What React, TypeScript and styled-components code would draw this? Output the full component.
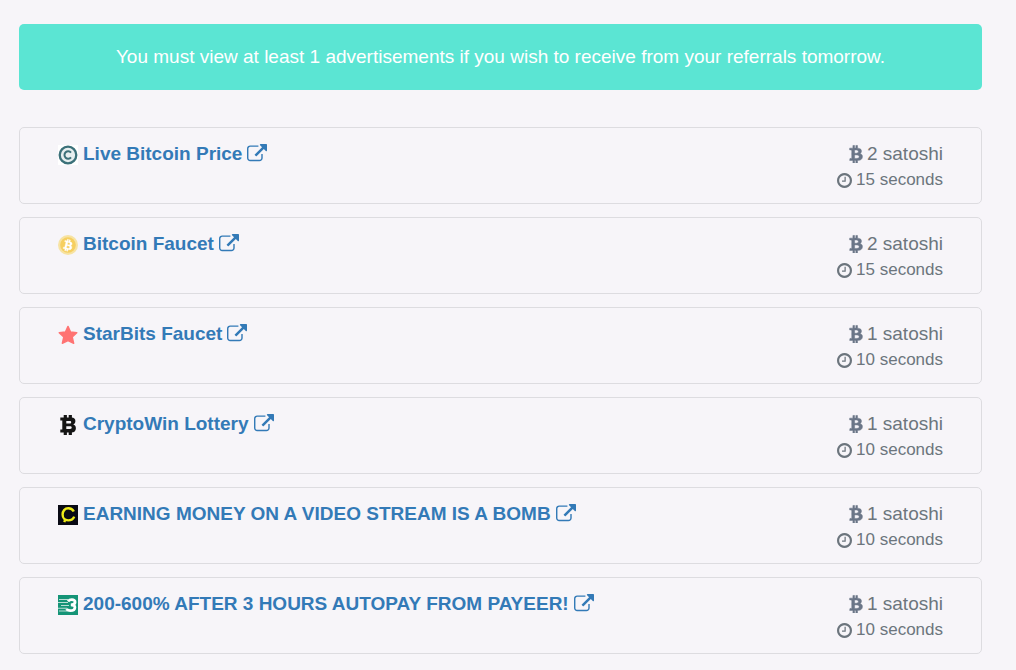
import React from "react";
import styled, { createGlobalStyle } from "styled-components";

const GlobalStyle = createGlobalStyle`
  *, *::before, *::after { box-sizing: border-box; }
  body {
    margin: 0;
    background: #f7f5f9;
    color: #6c757d;
    font-family: "Liberation Sans", Arial, sans-serif;
  }
`;

const Page = styled.main`
  padding: 24px 34px 17px 19px;
`;

const Notice = styled.p`
  margin: 0 0 37px;
  padding: 20px;
  border-radius: 5px;
  background: #5be5d3;
  color: #fff;
  font-size: 19px;
  line-height: 26px;
  text-align: center;
`;

const AdList = styled.ul`
  display: flex;
  flex-direction: column;
  gap: 13px;
  margin: 0;
  padding: 0;
  list-style: none;
`;

const AdCard = styled.li`
  display: flex;
  justify-content: space-between;
  gap: 20px;
  padding: 12px 38px 10px;
  border: 1px solid #dddce0;
  border-radius: 5px;
`;

const AdLink = styled.a`
  display: flex;
  align-items: center;
  align-self: flex-start;
  gap: 5px;
  color: #337ab7;
  font-size: 19px;
  font-weight: bold;
  line-height: 27px;
  text-decoration: none;
`;

const Favicon = styled.svg`
  flex: none;
  width: 20px;
  height: 20px;
  margin-top: 2px;
`;

const LinkIcon = styled.svg`
  flex: none;
  width: 20px;
  height: 20px;
  fill: currentColor;
`;

const Details = styled.div`
  display: flex;
  flex-direction: column;
  align-items: flex-end;
  white-space: nowrap;
`;

const Reward = styled.span`
  display: flex;
  align-items: center;
  gap: 4px;
  font-size: 19px;
  line-height: 27px;
`;

const Duration = styled(Reward)`
  font-size: 17px;
  line-height: 26px;
`;

const CoinIcon = styled.svg`
  width: 14px;
  height: 19px;
  fill: #6b7688;
  stroke: #6b7688;
  stroke-width: 50px;
`;

const ClockIcon = styled.svg`
  width: 15px;
  height: 15px;
  fill: currentColor;
`;

const BTC_PATH =
  "M1217 651q18 182-131 258 117 28 175 103t45 214q-7 71-32.5 125t-64.5 89-97 58.5-121.5 34.5-145.5 15v255h-154v-251q-80 0-122-1v252h-154v-255q-18 0-54-.5t-55-.5h-200l31-183h111q50 0 58-51v-402h16q-6-1-16-1v-287q-13-68-89-68h-111v-164l212 1q64 0 97-1v-252h154v247q82-2 122-2v-245h154v252q79 7 140 22.5t113 45 82.5 78 36.5 114.5zm-215 545q0-36-15-64t-37-46-57.5-30.5-65.5-18.5-74-9-69-3-64.5 1-47.5 1v338q8 0 37 .5t48 .5 53-1.5 58.5-4 57-8.5 55.5-14 47.5-21 39.5-30 24.5-40 9.5-51zm-71-476q0-33-12.5-58.5t-30.5-42-48-28-55-16.5-61.5-8-58-2.5-54 1-39.5.5v307q5 0 34.5.5t46.5 0 50-2 55-5.5 51.5-11 48.5-18.5 37-27 27-38.5 9-51z";

const CopyrightLogo = () => (
  <Favicon viewBox="0 0 20 20" aria-hidden="true">
    <rect width="20" height="20" fill="#fff" />
    <circle cx="10" cy="10" r="8.3" fill="#e6eeef" stroke="#3b7079" strokeWidth="2.3" />
    <path d="M13 7.6A3.7 3.7 0 1 0 13 12.4" fill="none" stroke="#3b7079" strokeWidth="2" />
  </Favicon>
);

const GoldCoinLogo = () => (
  <Favicon viewBox="0 0 20 20" aria-hidden="true">
    <circle cx="10" cy="10" r="10" fill="#f7e3a3" />
    <circle cx="10" cy="10" r="7.8" fill="#f6cf60" />
    <g transform="rotate(14 10 10) translate(5.2 3.6) scale(.007)">
      <path d={BTC_PATH} fill="#fff" stroke="#fff" strokeWidth="50" />
    </g>
  </Favicon>
);

const StarLogo = () => (
  <Favicon viewBox="0 0 20 20" aria-hidden="true">
    <path
      d="M10 1.4 12.6 7l6.2.7-4.6 4.3 1.5 6.3L10 15.6l-5.7 2.7L5.8 12 1.2 7.7 7.4 7z"
      fill="#ff7373"
      stroke="#ff7373"
      strokeWidth="1.4"
      strokeLinejoin="round"
    />
  </Favicon>
);

const BlackCoinLogo = () => (
  <Favicon viewBox="0 0 20 20" aria-hidden="true">
    <path
      d="M2.3 2.4h11.2c2.6 0 3.9 1.3 3.9 3.7 0 1.9-.9 3-2.2 3.5 1.7.5 2.7 1.8 2.7 3.6 0 2.7-1.7 4.3-4.5 4.3H2.3v-3h2V5.4h-2zM8.3 6v2.5h3.4c1 0 1.5-.5 1.5-1.3S12.7 6 11.7 6zm0 5.3v2.7h3.8c1.1 0 1.6-.4 1.6-1.4s-.6-1.3-1.6-1.3z"
      fill="#151515"
      fillRule="evenodd"
    />
    <path d="M5.7 0h3.2v3.5H5.700zM10.7 0h3.2v3.5h-3.200zM5.7 16.500h3.200V20h-3.200zM10.7 16.500h3.200V20h-3.200z" fill="#151515" />
  </Favicon>
);

const YellowRingLogo = () => (
  <Favicon viewBox="0 0 20 20" aria-hidden="true">
    <rect width="20" height="20" fill="#090a14" />
    <path
      d="M15.8 6.600C14.700 4.200 12.600 3.300 10.300 3.300 6.800 3.300 4.600 6 4.600 9.600c0 3.400 2.200 5.800 5.600 5.800 3 0 5.100-1.400 6-3.800M7.200 14.600l-.9 2.600"
      fill="none"
      stroke="#eeea18"
      strokeWidth="2.4"
    />
  </Favicon>
);

const GreenThreeLogo = () => (
  <Favicon viewBox="0 0 20 20" aria-hidden="true">
    <rect width="20" height="20" fill="#159477" />
    <path d="M1 4.500h9M0 7.500h10M3 10.500h8M0 13.300h9M1 16h8" stroke="#b9ded5" strokeWidth="1.100" />
    <path
      d="M10 6.300c1-1.200 2.300-1.600 3.900-1.600 2 0 3.300.8 3.200 2.400-.1 1.800-1.600 2.700-4.300 2.700 2.800 0 4.200.9 4.100 2.700-.1 2-2 3.200-4.500 3.200-1.800 0-3.100-.5-3.900-1.700"
      fill="none"
      stroke="#fff"
      strokeWidth="2.800"
    />
  </Favicon>
);

interface Ad {
  title: string;
  Logo: React.ComponentType;
  satoshi: number;
  seconds: number;
}

const ads: Ad[] = [
  { title: "Live Bitcoin Price", Logo: CopyrightLogo, satoshi: 2, seconds: 15 },
  { title: "Bitcoin Faucet", Logo: GoldCoinLogo, satoshi: 2, seconds: 15 },
  { title: "StarBits Faucet", Logo: StarLogo, satoshi: 1, seconds: 10 },
  { title: "CryptoWin Lottery", Logo: BlackCoinLogo, satoshi: 1, seconds: 10 },
  { title: "EARNING MONEY ON A VIDEO STREAM IS A BOMB", Logo: YellowRingLogo, satoshi: 1, seconds: 10 },
  { title: "200-600% AFTER 3 HOURS AUTOPAY FROM PAYEER!", Logo: GreenThreeLogo, satoshi: 1, seconds: 10 },
];

export default function App() {
  return (
    <>
      <GlobalStyle />
      <Page>
        <Notice>
          You must view at least 1 advertisements if you wish to receive from your referrals tomorrow.
        </Notice>
        <AdList>
          {ads.map(({ title, Logo, satoshi, seconds }) => (
            <AdCard key={title}>
              <AdLink href="#">
                <Logo />
                {title}
                <LinkIcon viewBox="0 0 1792 1792" aria-hidden="true">
                  <path d="M1408 928v320q0 119-84.5 203.5t-203.5 84.5h-832q-119 0-203.5-84.5t-84.5-203.5v-832q0-119 84.5-203.5t203.5-84.5h704q14 0 23 9t9 23v64q0 14-9 23t-23 9h-704q-66 0-113 47t-47 113v832q0 66 47 113t113 47h832q66 0 113-47t47-113v-320q0-14 9-23t23-9h64q14 0 23 9t9 23zm384-864v512q0 26-19 45t-45 19-45-19l-176-176-652 652q-10 10-23 10t-23-10l-114-114q-10-10-10-23t10-23l652-652-176-176q-19-19-19-45t19-45 45-19h512q26 0 45 19t19 45z" />
                </LinkIcon>
              </AdLink>
              <Details>
                <Reward>
                  <CoinIcon viewBox="90 0 1230 1792" aria-hidden="true">
                    <path d={BTC_PATH} />
                  </CoinIcon>
                  {satoshi} satoshi
                </Reward>
                <Duration>
                  <ClockIcon viewBox="128 128 1536 1536" aria-hidden="true">
                    <path d="M1024 544v448q0 14-9 23t-23 9h-320q-14 0-23-9t-9-23v-64q0-14 9-23t23-9h224v-352q0-14 9-23t23-9h64q14 0 23 9t9 23zm416 352q0-148-73-273t-198-198-273-73-273 73-198 198-73 273 73 273 198 198 273 73 273-73 198-198 73-273zm224 0q0 209-103 385.5t-279.5 279.5-385.5 103-385.5-103-279.5-279.5-103-385.5 103-385.5 279.5-279.5 385.5-103 385.5 103 279.5 279.5 103 385.5z" />
                  </ClockIcon>
                  {seconds} seconds
                </Duration>
              </Details>
            </AdCard>
          ))}
        </AdList>
      </Page>
    </>
  );
}
